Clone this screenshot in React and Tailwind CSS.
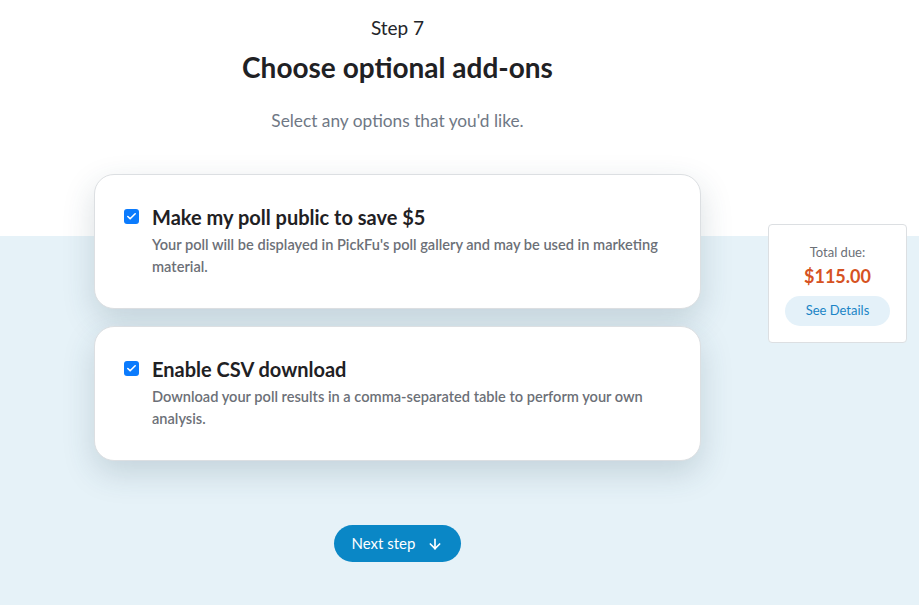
import React from 'react';
import { ArrowDown, Check } from 'lucide-react';

const addOns = [
  {
    title: 'Make my poll public to save $5',
    text: "Your poll will be displayed in PickFu's poll gallery and may be used in marketing material.",
  },
  {
    title: 'Enable CSV download',
    text: 'Download your poll results in a comma-separated table to perform your own analysis.',
  },
];

const AddOnCard = ({ title, text }) => (
  <div className="w-[607px] rounded-[20px] border border-[#dcdfe2] bg-white pl-[29px] pr-[28px] pt-[31px] pb-[30px] shadow-[0_12px_32px_rgba(40,70,90,0.18)]">
    <div className="flex items-start gap-[13px]">
      <span className="mt-[3px] flex h-[15px] w-[15px] shrink-0 items-center justify-center rounded-[3px] bg-[#0b7bfd]">
        <Check size={11} strokeWidth={3.5} className="text-white" />
      </span>
      <div>
        <h3 className="text-[20px] font-bold leading-[22px] text-[#1f2124]">{title}</h3>
        <p className="mt-[6px] text-[14.6px] font-semibold leading-[22px] text-[#6c7077]">{text}</p>
      </div>
    </div>
  </div>
);

export default function App() {
  return (
    <div className="relative min-h-[605px] w-[919px] bg-[linear-gradient(to_bottom,#ffffff_236px,#e6f2f8_236px)] font-['Lato',sans-serif]">
      <div className="flex w-[795px] flex-col items-center pt-[14px]">
        <div className="text-[19px] leading-[28px] text-[#23252a]">Step 7</div>
        <h1 className="mt-[8px] text-[28px] font-bold leading-[34px] text-[#1f2124]">Choose optional add-ons</h1>
        <p className="mt-[25px] text-[17.3px] leading-[24px] text-[#6f7885]">Select any options that you'd like.</p>

        <div className="mt-[41px] flex flex-col gap-[17px]">
          {addOns.map((a) => (
            <AddOnCard key={a.title} {...a} />
          ))}
        </div>

        <button className="mt-[64px] flex h-[37px] w-[127px] items-center justify-center gap-[12px] rounded-full bg-[#0a87c6] text-[15px] text-white">
          Next step
          <ArrowDown size={16} strokeWidth={2.5} />
        </button>
      </div>

      <div className="absolute left-[768px] top-[224px] flex w-[139px] flex-col items-center rounded-[4px] border border-[#dcdfe2] bg-white pt-[18px] pb-[16px]">
        <div className="text-[13px] leading-[18px] text-[#6c7077]">Total due:</div>
        <div className="mt-[3px] text-[18px] font-bold leading-[24px] text-[#d65222]">$115.00</div>
        <button className="mt-[8px] h-[30px] w-[105px] rounded-full bg-[#e4f1f9] text-[13px] text-[#1a84c6]">See Details</button>
      </div>
    </div>
  );
}
